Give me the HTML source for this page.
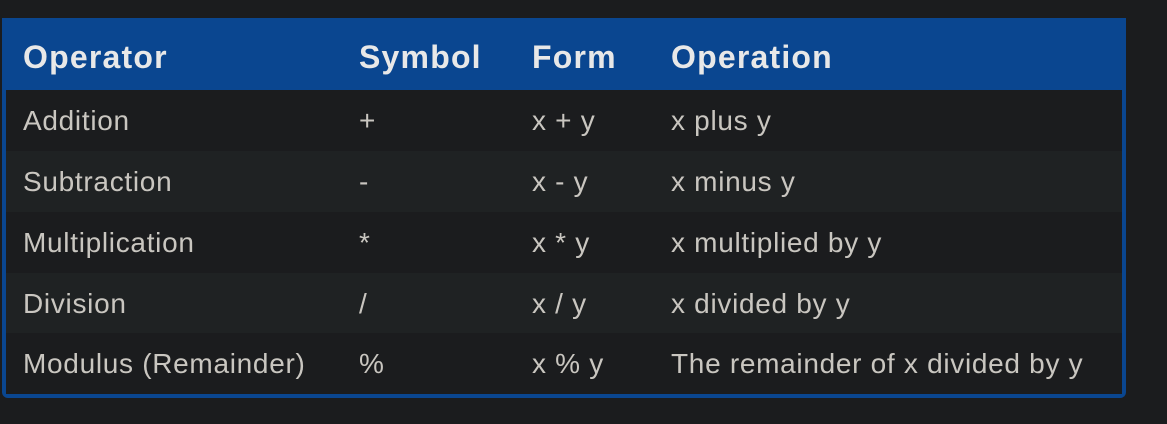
<!DOCTYPE html>
<html><head><style>
html,body{margin:0;padding:0;background:#1b1c1e;width:1167px;height:424px;overflow:hidden}
.box{position:absolute;left:2px;top:18px;width:1116px;height:376px;border:4px solid #0a4690;border-top:0;border-radius:0 0 6px 6px;background:#1b1c1e}
.hd{position:absolute;left:-4px;top:0;width:1124px;height:72px;background:#0a4690}
.row{position:absolute;left:0;width:1116px;height:61px}
.t{position:absolute;font-family:"Liberation Sans",sans-serif;white-space:nowrap}
.h{color:#e8e8e8;font-weight:bold;font-size:32px;letter-spacing:1.2px;top:21px}
.r{color:#c9c6c0;font-size:28px;letter-spacing:0.7px;top:15px}
</style></head><body>
<div class="box">
<div class="hd">
<div class="t h" style="left:21px">Operator</div>
<div class="t h" style="left:357px">Symbol</div>
<div class="t h" style="left:530px">Form</div>
<div class="t h" style="left:669px">Operation</div>
</div>
<div class="row" style="top:72px;background:#1b1c1e">
<div class="t r" style="left:17px">Addition</div><div class="t r" style="left:353px">+</div><div class="t r" style="left:526px">x + y</div><div class="t r" style="left:665px">x plus y</div></div>
<div class="row" style="top:133px;background:#1f2223">
<div class="t r" style="left:17px">Subtraction</div><div class="t r" style="left:353px">-</div><div class="t r" style="left:526px">x - y</div><div class="t r" style="left:665px">x minus y</div></div>
<div class="row" style="top:194px;background:#1b1c1e">
<div class="t r" style="left:17px">Multiplication</div><div class="t r" style="left:353px">*</div><div class="t r" style="left:526px">x * y</div><div class="t r" style="left:665px">x multiplied by y</div></div>
<div class="row" style="top:255px;background:#1f2223">
<div class="t r" style="left:17px">Division</div><div class="t r" style="left:353px">/</div><div class="t r" style="left:526px">x / y</div><div class="t r" style="left:665px">x divided by y</div></div>
<div class="row" style="top:315px;height:61px;background:#1b1c1e">
<div class="t r" style="left:17px">Modulus (Remainder)</div><div class="t r" style="left:353px">%</div><div class="t r" style="left:526px">x % y</div><div class="t r" style="left:665px">The remainder of x divided by y</div></div>
</div>
</body></html>
